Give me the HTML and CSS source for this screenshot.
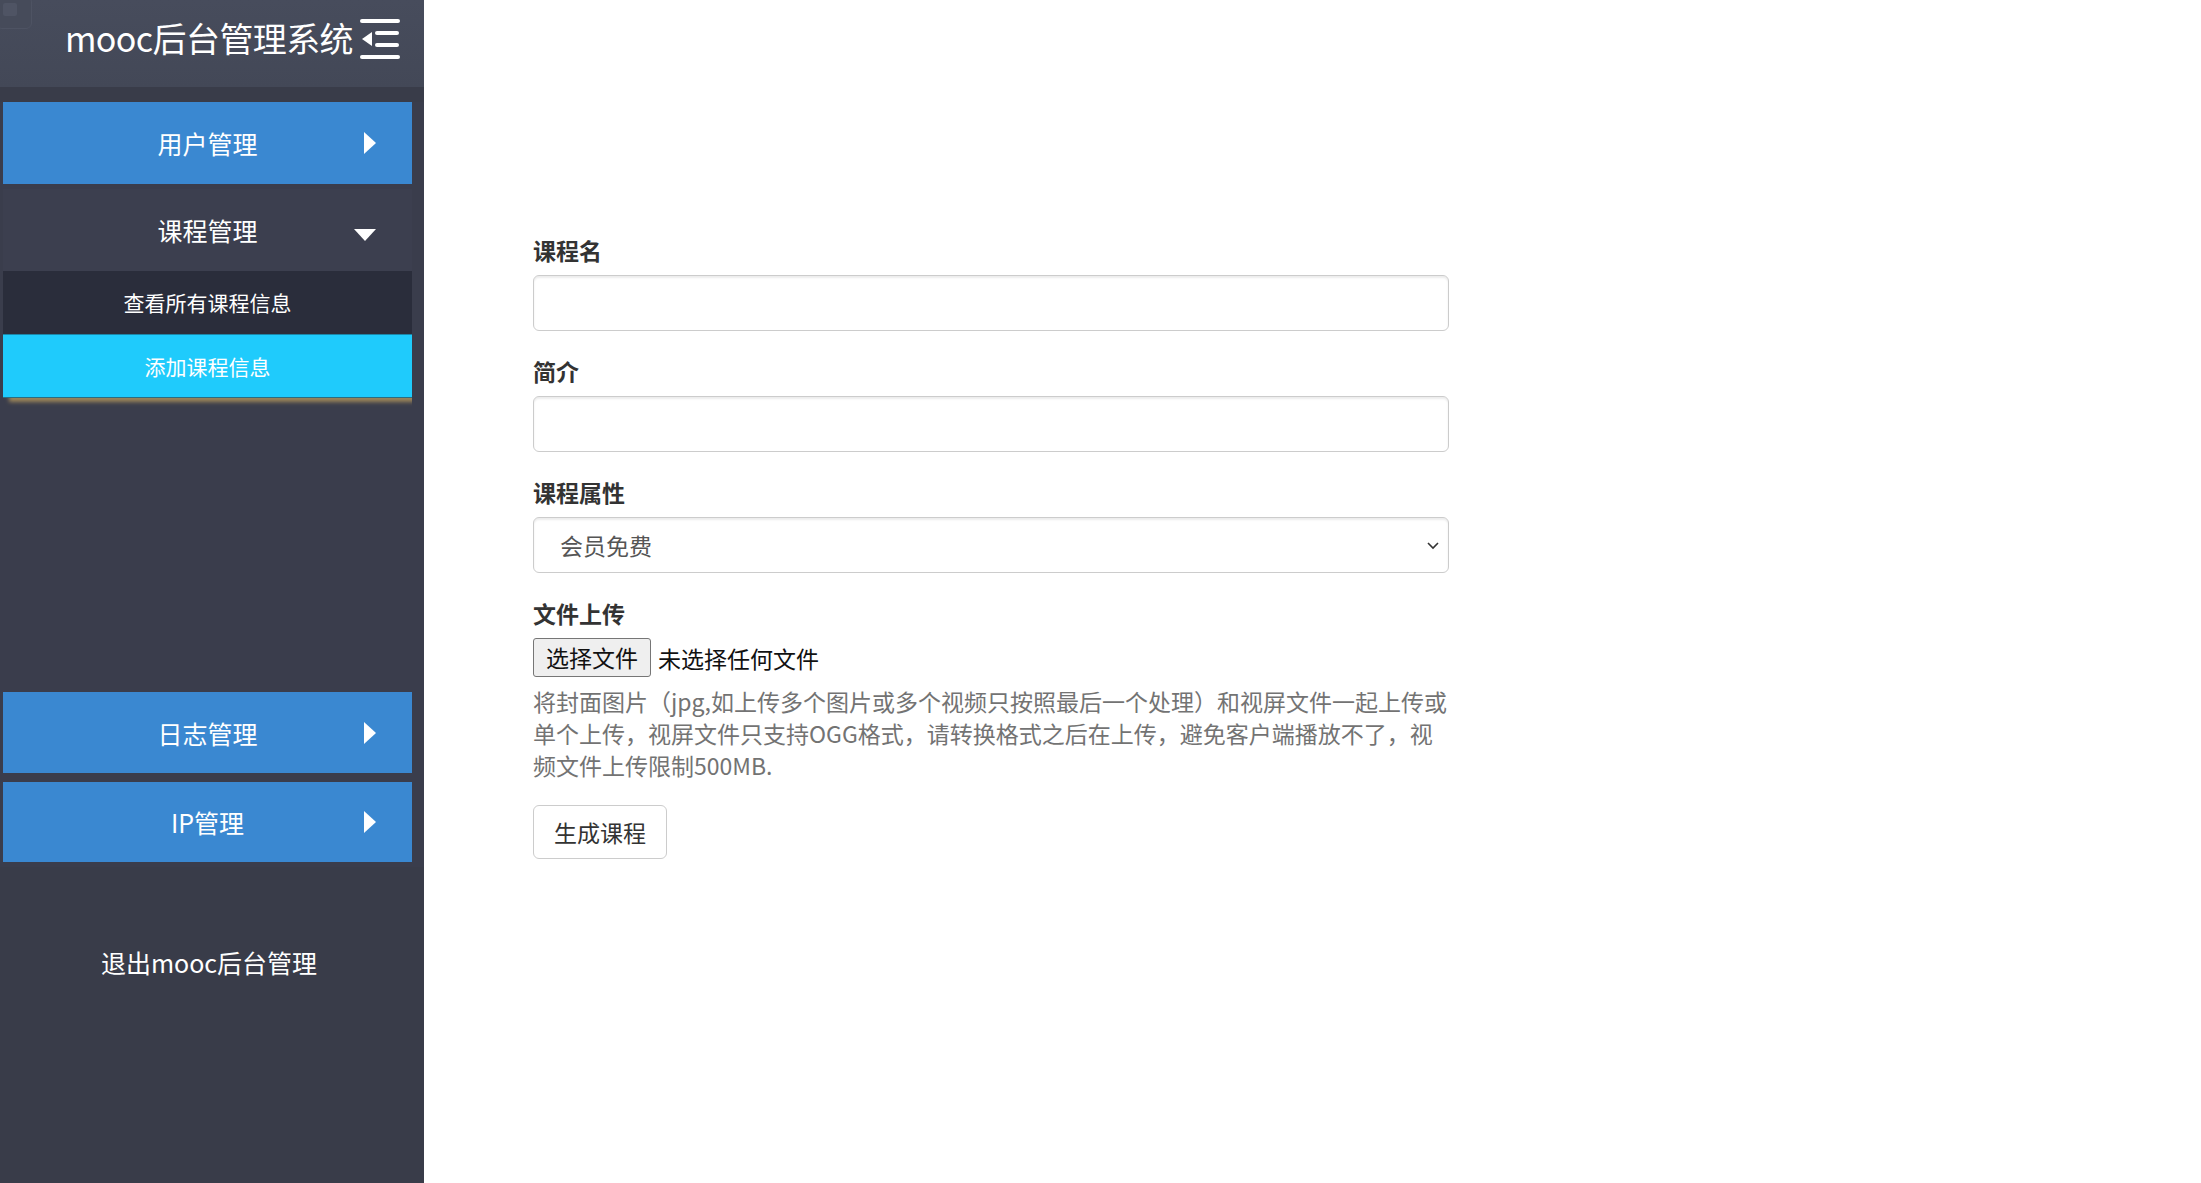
FILE: index.html
```html
<!DOCTYPE html>
<html lang="zh-CN">
<head>
    <meta charset="UTF-8">
    <meta name="viewport" content="width=device-width, initial-scale=1.0">
    <title>mooc后台管理系统</title>
    <link rel="stylesheet" href="styles.css">
</head>
<body>
    <div class="layout">
        <aside class="sidebar">
            <div class="brand">
                <span class="brand-corner"></span>
                <span class="brand-name">mooc后台管理系统</span>
                <svg class="brand-toggle" width="40" height="44" viewBox="0 0 40 44">
                    <g stroke="#fff" stroke-width="4" stroke-linecap="round">
                        <line x1="2" y1="5" x2="38" y2="5"/>
                        <line x1="17" y1="17" x2="37" y2="17"/>
                        <line x1="17" y1="29" x2="37" y2="29"/>
                        <line x1="2" y1="41" x2="38" y2="41"/>
                    </g>
                    <polygon points="2,23 12,16 12,30" fill="#fff"/>
                </svg>
            </div>

            <ul class="menu">
                <li class="menu-item">
                    <a class="menu-title blue" href="#"><span></span><span>用户管理</span><i class="arrow-right"></i></a>
                </li>
                <li class="menu-item open">
                    <a class="menu-title" href="#"><span></span><span>课程管理</span><i class="arrow-down"></i></a>
                    <ul class="submenu">
                        <li><a href="#">查看所有课程信息</a></li>
                        <li class="active"><a href="#">添加课程信息</a></li>
                    </ul>
                </li>
                <li class="menu-item log">
                    <a class="menu-title blue" href="#"><span></span><span>日志管理</span><i class="arrow-right"></i></a>
                </li>
                <li class="menu-item">
                    <a class="menu-title blue" href="#"><span></span><span>IP管理</span><i class="arrow-right"></i></a>
                </li>
            </ul>

            <a class="logout" href="#">退出mooc后台管理</a>
        </aside>

        <main class="content">
            <form class="course-form">
                <div class="form-group">
                    <label for="name">课程名</label>
                    <input type="text" id="name" class="form-control">
                </div>
                <div class="form-group">
                    <label for="intro">简介</label>
                    <input type="text" id="intro" class="form-control">
                </div>
                <div class="form-group">
                    <label for="kind">课程属性</label>
                    <div class="select-wrap">
                        <select id="kind" class="form-control">
                            <option>会员免费</option>
                            <option>免费</option>
                            <option>付费</option>
                        </select>
                        <svg class="select-arrow" width="14" height="9" viewBox="0 0 14 9">
                            <polyline points="2,2 7,7 12,2" fill="none" stroke="#333" stroke-width="1.6"/>
                        </svg>
                    </div>
                </div>
                <div class="form-group">
                    <label>文件上传</label>
                    <div class="file-pick">
                        <span class="file-btn">选择文件</span>
                        <span class="file-name">未选择任何文件</span>
                    </div>
                    <p class="help-block">将封面图片（jpg,如上传多个图片或多个视频只按照最后一个处理）和视屏文件一起上传或单个上传，视屏文件只支持OGG格式，请转换格式之后在上传，避免客户端播放不了，视频文件上传限制500MB.</p>
                </div>
                <button type="button" class="btn">生成课程</button>
            </form>
        </main>
    </div>
</body>
</html>
```

FILE: styles.css
```css
* {
    margin: 0;
    padding: 0;
    box-sizing: border-box;
}
body {
    font-family: "Noto Sans CJK SC", "Liberation Sans", sans-serif;
    background-color: #ffffff;
    color: #333;
}
a {
    color: #ffffff;
    text-decoration: none;
}
ul {
    list-style: none;
}
.layout {
    display: flex;
    height: 100vh;
}
.sidebar {
    width: 424px;
    flex-shrink: 0;
    background-color: #393c49;
    display: flex;
    flex-direction: column;
}
.brand {
    position: relative;
    height: 87px;
    background: linear-gradient(180deg, #474c5c, #434857);
    display: flex;
    align-items: center;
    justify-content: flex-end;
    gap: 7px;
    padding: 0 24px 12px 0;
}
.brand-corner {
    position: absolute;
    top: -4px;
    left: -4px;
    width: 36px;
    height: 33px;
    border: 1px solid #4e5363;
    border-radius: 6px;
    background: #464b5a;
}
.brand-corner::after {
    content: "";
    position: absolute;
    top: 6px;
    left: 6px;
    width: 14px;
    height: 13px;
    border-radius: 2px;
    background: #4f5464;
}
.brand-name {
    font-size: 34px;
    line-height: 44px;
    color: #ffffff;
    letter-spacing: -0.6px;
}
.menu {
    margin-top: 15px;
    padding: 0 12px 0 3px;
    background-color: #3a3d4c;
}
.menu-item {
    margin-bottom: 5px;
}
.menu-title {
    display: grid;
    grid-template-columns: 1fr auto 1fr;
    align-items: center;
    height: 82px;
    font-size: 25px;
    background-color: #3c3f4f;
}
.menu-title.blue {
    background-color: #3a88d1;
}
.menu-title i {
    justify-self: end;
    margin-right: 36px;
}
.arrow-right {
    width: 0;
    height: 0;
    border-top: 11px solid transparent;
    border-bottom: 11px solid transparent;
    border-left: 12px solid #ffffff;
}
.arrow-down {
    width: 0;
    height: 0;
    margin-top: 10px;
    border-left: 11px solid transparent;
    border-right: 11px solid transparent;
    border-top: 12px solid #ffffff;
}
.open {
    margin-bottom: 0;
}
.submenu {
    overflow: hidden;
    padding-bottom: 10px;
}
.submenu a {
    display: block;
    text-align: center;
    font-size: 21px;
    height: 63px;
    line-height: 63px;
    background-color: #2a2d3b;
}
.submenu .active a {
    height: 64px;
    line-height: 62px;
    background-color: #1fcbfc;
    border-top: 1px solid #1b86a8;
    border-bottom: 1px solid #2b6d80;
    box-shadow: 6px 4px 4px #9c865a;
}
.log {
    margin-top: 284px;
    margin-bottom: 9px;
}
.log .menu-title {
    height: 81px;
}
.log + .menu-item .menu-title {
    height: 80px;
}
.logout {
    display: block;
    margin-top: 75px;
    padding-right: 6px;
    text-align: center;
    font-size: 25px;
    line-height: 40px;
}
.content {
    flex: 1;
    padding: 234px 0 0 109px;
}
.course-form {
    width: 916px;
}
.form-group {
    margin-bottom: 24px;
}
.form-group label {
    display: block;
    font-size: 23px;
    font-weight: bold;
    line-height: 33px;
    margin-bottom: 8px;
    color: #333;
}
.form-control {
    display: block;
    width: 100%;
    height: 56px;
    padding: 10px 20px;
    font-family: inherit;
    font-size: 23px;
    color: #555;
    background-color: #ffffff;
    border: 1px solid #cccccc;
    border-radius: 6px;
    box-shadow: inset 0 2px 2px rgba(0,0,0,0.075);
}
.select-wrap {
    position: relative;
}
select.form-control {
    appearance: none;
    -webkit-appearance: none;
    padding: 0 40px 0 26px;
    line-height: 52px;
}
.select-arrow {
    position: absolute;
    right: 9px;
    top: 24px;
    pointer-events: none;
}
.file-pick {
    display: flex;
    align-items: center;
    gap: 7px;
    font-size: 23px;
    color: #111;
}
.file-btn {
    height: 39px;
    width: 118px;
    line-height: 37px;
    text-align: center;
    background-color: #efefef;
    border: 1px solid #767676;
    border-radius: 3px;
}
.help-block {
    margin-top: 8px;
    font-size: 23px;
    line-height: 32px;
    color: #737373;
}
.btn {
    height: 54px;
    padding: 0 20px;
    font-family: inherit;
    font-size: 23px;
    color: #333;
    background-color: #ffffff;
    border: 1px solid #cccccc;
    border-radius: 6px;
}
```
